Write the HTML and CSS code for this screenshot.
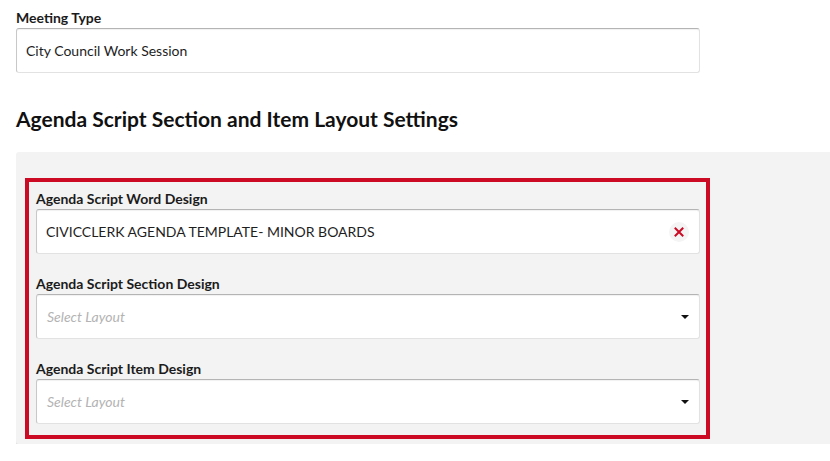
FILE: index.html
```html
<!DOCTYPE html>
<html lang="en">
<head>
<meta charset="utf-8">
<title>Agenda Script Settings</title>
<link rel="stylesheet" href="styles.css">
</head>
<body>
<div class="page">
  <div class="field field-top">
    <label class="field-label">Meeting Type</label>
    <div class="input">
      <span class="input-value">City Council Work Session</span>
    </div>
  </div>

  <h2 class="section-title">Agenda Script Section and Item Layout Settings</h2>

  <div class="panel">
    <div class="highlight">
      <div class="field">
        <label class="field-label">Agenda Script Word Design</label>
        <div class="input">
          <span class="input-value">CIVICCLERK AGENDA TEMPLATE- MINOR BOARDS</span>
          <span class="clear">
            <svg width="10" height="10" viewBox="0 0 10 10"><path d="M1.5 1.5 L8.5 8.5 M8.5 1.5 L1.5 8.5" stroke="#cc0a24" stroke-width="2" stroke-linecap="square"/></svg>
          </span>
        </div>
      </div>
      <div class="field">
        <label class="field-label">Agenda Script Section Design</label>
        <div class="input">
          <span class="placeholder">Select Layout</span>
          <span class="caret"></span>
        </div>
      </div>
      <div class="field">
        <label class="field-label">Agenda Script Item Design</label>
        <div class="input">
          <span class="placeholder">Select Layout</span>
          <span class="caret"></span>
        </div>
      </div>
    </div>
  </div>
</div>
</body>
</html>
```

FILE: styles.css
```css
html, body {
  margin: 0;
  padding: 0;
  background: #ffffff;
  overflow: hidden;
}

body {
  font-family: Lato, "Open Sans", "Liberation Sans", sans-serif;
  color: #1b1b1b;
  font-size: 14px;
}

.page {
  padding: 9px 0 0 16px;
}

.field {
  display: flex;
  flex-direction: column;
  gap: 2px;
}

.field-top {
  width: 684px;
}

.field-label {
  font-size: 14px;
  line-height: 17px;
  font-weight: 700;
  color: #1b1b1b;
}

.input {
  height: 45px;
  box-sizing: border-box;
  background: #ffffff;
  border: 1px solid #e2e2e2;
  border-top-color: #b4b4b4;
  border-left-color: #c8c8c8;
  border-radius: 3px;
  box-shadow: inset 0 1px 1px rgba(0, 0, 0, 0.06);
  display: flex;
  align-items: center;
  padding: 0 10px 0 9px;
}

.input-value {
  flex: 1;
  font-size: 14px;
  color: #1e1e1e;
}

.placeholder {
  flex: 1;
  font-size: 14px;
  font-style: italic;
  color: #b3b3b3;
  padding-left: 1px;
}

.clear {
  width: 20px;
  height: 20px;
  border-radius: 50%;
  background: #f4f4f4;
  display: flex;
  align-items: center;
  justify-content: center;
}

.caret {
  width: 0;
  height: 0;
  border-left: 4px solid transparent;
  border-right: 4px solid transparent;
  border-top: 4px solid #111;
}

.section-title {
  margin: 33px 0 21px 0;
  font-size: 21px;
  line-height: 25px;
  font-weight: 700;
  color: #111;
}

.panel {
  background: #f3f3f3;
  border-radius: 3px 0 0 3px;
  box-shadow: 0 2px 0 #e4e4e4;
  padding: 26px 0 5px 9px;
}

.highlight {
  width: 685px;
  box-sizing: border-box;
  border: 4px solid #cc0a24;
  padding: 8px 6px 11px 7px;
  display: flex;
  flex-direction: column;
  gap: 21px;
}
```
